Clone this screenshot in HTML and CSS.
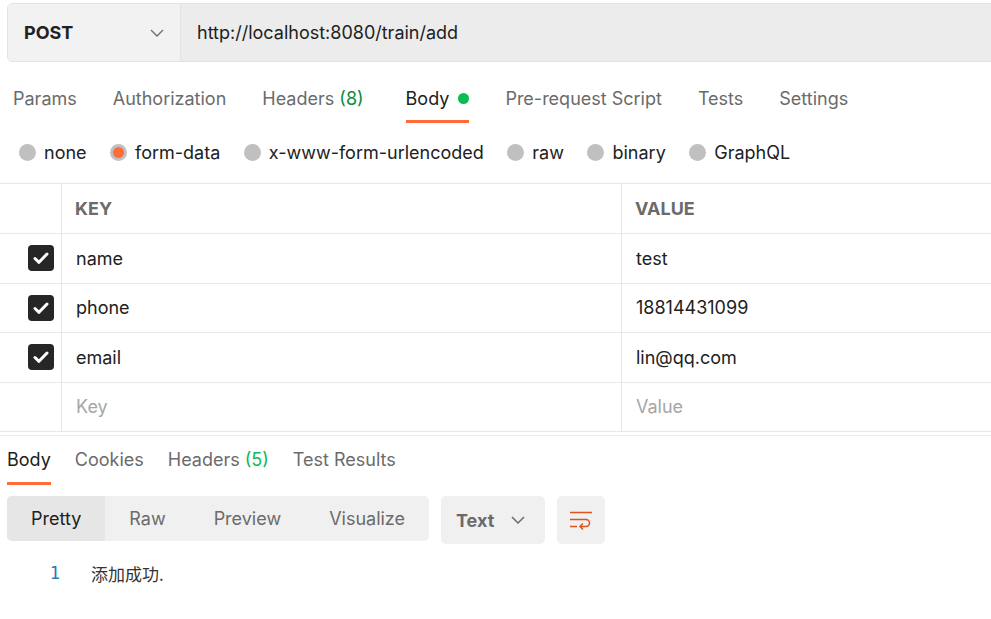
FILE: index.html
```html
<!DOCTYPE html>
<html>
<head>
<meta charset="utf-8">
<link rel="stylesheet" href="styles.css">
</head>
<body>
<div class="page">
  <div class="urlbar">
    <div class="method">
      <span class="method-name">POST</span>
      <svg class="chev" width="14" height="8" viewBox="0 0 14 8"><path d="M1 1l6 6 6-6" fill="none" stroke="#6b6b6b" stroke-width="1.3"/></svg>
    </div>
    <div class="url">http://localhost:8080/train/add</div>
  </div>

  <div class="tabs">
    <div class="tab">Params</div>
    <div class="tab">Authorization</div>
    <div class="tab wide">Headers <span class="count">(8)</span></div>
    <div class="tab active">Body<span class="dot"></span></div>
    <div class="tab">Pre-request Script</div>
    <div class="tab">Tests</div>
    <div class="tab">Settings</div>
  </div>

  <div class="radios">
    <div class="radio"><span class="circle"></span>none</div>
    <div class="radio"><span class="circle on"></span>form-data</div>
    <div class="radio"><span class="circle"></span>x-www-form-urlencoded</div>
    <div class="radio"><span class="circle"></span>raw</div>
    <div class="radio"><span class="circle"></span>binary</div>
    <div class="radio"><span class="circle"></span>GraphQL</div>
  </div>

  <div class="table">
    <div class="row head">
      <div class="c0"></div>
      <div class="c1">KEY</div>
      <div class="c2">VALUE</div>
    </div>
    <div class="row">
      <div class="c0"><span class="check"><svg width="16" height="12" viewBox="0 0 16 12"><path d="M2 6.5l4 3.8L14 2" fill="none" stroke="#fff" stroke-width="3" stroke-linecap="round" stroke-linejoin="round"/></svg></span></div>
      <div class="c1">name</div>
      <div class="c2">test</div>
    </div>
    <div class="row">
      <div class="c0"><span class="check"><svg width="16" height="12" viewBox="0 0 16 12"><path d="M2 6.5l4 3.8L14 2" fill="none" stroke="#fff" stroke-width="3" stroke-linecap="round" stroke-linejoin="round"/></svg></span></div>
      <div class="c1">phone</div>
      <div class="c2">18814431099</div>
    </div>
    <div class="row">
      <div class="c0"><span class="check"><svg width="16" height="12" viewBox="0 0 16 12"><path d="M2 6.5l4 3.8L14 2" fill="none" stroke="#fff" stroke-width="3" stroke-linecap="round" stroke-linejoin="round"/></svg></span></div>
      <div class="c1">email</div>
      <div class="c2">lin@qq.com</div>
    </div>
    <div class="row">
      <div class="c0"></div>
      <div class="c1 ph">Key</div>
      <div class="c2 ph">Value</div>
    </div>
  </div>

  <div class="response">
    <div class="rtabs">
      <div class="rtab active">Body</div>
      <div class="rtab">Cookies</div>
      <div class="rtab">Headers <span class="count2">(5)</span></div>
      <div class="rtab">Test Results</div>
    </div>

    <div class="toolbar">
      <div class="seg">
        <div class="seg-item sel">Pretty</div>
        <div class="seg-item">Raw</div>
        <div class="seg-item">Preview</div>
        <div class="seg-item">Visualize</div>
      </div>
      <div class="fmt">
        <span>Text</span>
        <svg width="14" height="8" viewBox="0 0 14 8"><path d="M1 1l6 6 6-6" fill="none" stroke="#6b6b6b" stroke-width="1.5"/></svg>
      </div>
      <div class="wrap">
        <svg width="24" height="20" viewBox="0 0 24 20"><path d="M1 2.5h22M1 9.5h16a3.5 3.5 0 0 1 0 7H11M1 16.5h7" fill="none" stroke="#e0521e" stroke-width="1.5"/><path d="M14 13.5l-3 3 3 3" fill="none" stroke="#e0521e" stroke-width="1.5"/></svg>
      </div>
    </div>

    <div class="code">
      <span class="ln">1</span>
      <span class="txt">添加成功.</span>
    </div>
  </div>
</div>
</body>
</html>
```

FILE: styles.css
```css
html, body {
  margin: 0;
  padding: 0;
  background: #fff;
  overflow: hidden;
}
body {
  font-family: Inter, "Noto Sans", "Noto Sans CJK SC", sans-serif;
  font-size: 18px;
  color: #212121;
}
.page {
  width: 991px;
  height: 619px;
  overflow: hidden;
}
.urlbar {
  display: flex;
  margin: 3px 0 0 7px;
  width: 1010px;
  height: 57px;
  border: 1px solid #e4e4e4;
  border-radius: 5px;
  overflow: hidden;
}
.method {
  flex: none;
  display: flex;
  align-items: center;
  justify-content: space-between;
  padding: 0 16px 0 16px;
  background: #f2f2f2;
  border-right: 1px solid #e4e4e4;
  box-sizing: border-box;
  width: 173px;
}
.method-name {
  font-weight: 700;
  color: #212121;
}
.url {
  flex: 1;
  display: flex;
  align-items: center;
  padding-left: 16px;
  background: #ececec;
}
.tabs {
  display: flex;
  gap: 36px;
  padding-left: 13px;
  height: 61px;
}
.tab {
  color: #6b6b6b;
  padding-top: 22px;
  line-height: 30px;
  position: relative;
  white-space: nowrap;
}
.tab.wide { margin-right: 6px; }
.tab.active {
  color: #212121;
}
.tab.active::after {
  content: "";
  position: absolute;
  left: 0;
  right: 0;
  top: 58px;
  height: 3px;
  background: #ff6c37;
}
.count { color: #0e8a3a; }
.count2 { color: #0cbb52; }
.dot {
  display: inline-block;
  width: 11px;
  height: 11px;
  border-radius: 50%;
  background: #0cbb52;
  margin-left: 9px;
  vertical-align: 1px;
}
.radios {
  display: flex;
  gap: 23.5px;
  padding-left: 19px;
  height: 58px;
  align-items: center;
  margin-bottom: 2px;
}
.radio {
  display: flex;
  align-items: center;
  gap: 8px;
  color: #212121;
  white-space: nowrap;
}
.circle {
  width: 17px;
  height: 17px;
  border-radius: 50%;
  background: #c0c0c0;
  box-sizing: border-box;
}
.circle.on {
  border: 3px solid #c0c0c0;
  background: #ff6c37;
}
.table {
  border-top: 1px solid #e8e8e8;
  border-bottom: 1px solid #e8e8e8;
}
.row {
  display: flex;
  height: 48.5px;
  border-bottom: 1px solid #e8e8e8;
}
.row.head { height: 49px; }
.row:last-child { border-bottom: none; }
.row > div {
  display: flex;
  align-items: center;
  box-sizing: border-box;
}
.c0 {
  width: 62px;
  justify-content: flex-end;
  padding-right: 7px;
  border-right: 1px solid #e8e8e8;
  flex: none;
}
.c1 {
  width: 560px;
  flex: none;
  padding-left: 14px;
  border-right: 1px solid #e8e8e8;
}
.c2 {
  flex: 1;
  padding-left: 14px;
}
.head .c1, .head .c2 {
  font-weight: 700;
  color: #6b6b6b;
  padding-left: 13px;
}
.ph { color: #a6a6a6; }
.check {
  width: 26px;
  height: 26px;
  border-radius: 4px;
  background: #262626;
  display: flex;
  align-items: center;
  justify-content: center;
}
.response {
  margin-top: 3px;
  border-top: 1px solid #ececec;
}
.rtabs {
  display: flex;
  gap: 24px;
  padding-left: 7px;
  height: 49px;
}
.rtab {
  color: #6b6b6b;
  line-height: 48px;
  position: relative;
  white-space: nowrap;
}
.rtab.active { color: #212121; }
.rtab.active::after {
  content: "";
  position: absolute;
  left: 0;
  right: 0;
  top: 46px;
  height: 3px;
  background: #ff6c37;
}
.toolbar {
  display: flex;
  gap: 12px;
  padding-left: 7px;
  margin-top: 11px;
  align-items: flex-start;
}
.seg {
  display: flex;
  background: #f0f0f0;
  border-radius: 5px;
  height: 45px;
  width: 422px;
  overflow: hidden;
}
.seg-item {
  display: flex;
  align-items: center;
  justify-content: center;
  color: #6b6b6b;
  padding: 0 24px;
}
.seg-item.sel {
  background: #e6e6e6;
  color: #212121;
  width: 99px;
  box-sizing: border-box;
}
.fmt {
  width: 104px;
  height: 48px;
  box-sizing: border-box;
  background: #f0f0f0;
  border-radius: 5px;
  display: flex;
  align-items: center;
  justify-content: space-between;
  padding: 0 20px 0 15px;
  font-weight: 700;
  color: #6b6b6b;
}
.wrap {
  width: 48px;
  height: 48px;
  background: #f0f0f0;
  border-radius: 5px;
  display: flex;
  align-items: center;
  justify-content: center;
}
.code {
  display: flex;
  align-items: center;
  margin-top: 16px;
  height: 26px;
}
.ln {
  width: 60px;
  text-align: right;
  color: #2a7ab0;
  font-family: "DejaVu Sans Mono", monospace;
  font-size: 17px;
}
.txt {
  margin-left: 31px;
  color: #333;
  font-family: "Noto Sans CJK SC", "Liberation Mono", monospace;
  font-size: 17px;
}
```
